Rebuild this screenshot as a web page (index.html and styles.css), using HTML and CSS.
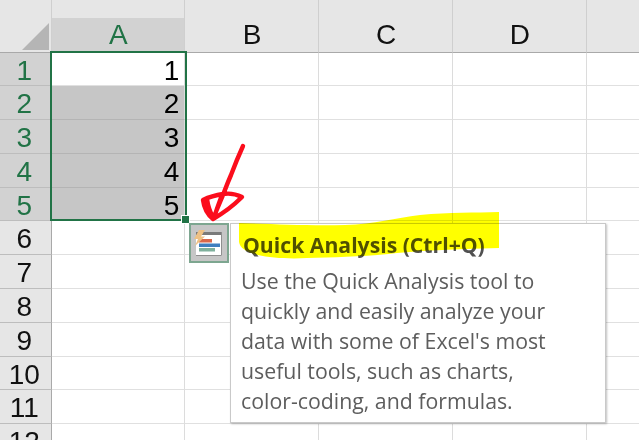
FILE: index.html
```html
<!DOCTYPE html>
<html lang="en">
<head>
<meta charset="utf-8">
<title>Quick Analysis</title>
<link rel="stylesheet" href="styles.css">
</head>
<body>
<div class="sheet">
  <div class="corner"><div class="tri"></div></div>
  <div class="col sel">A</div><div class="col">B</div><div class="col">C</div><div class="col">D</div><div class="col"></div>

  <div class="rh sel">1</div><div class="cell num first">1</div><div class="cell"></div><div class="cell"></div><div class="cell"></div><div class="cell"></div>
  <div class="rh sel">2</div><div class="cell num shade">2</div><div class="cell"></div><div class="cell"></div><div class="cell"></div><div class="cell"></div>
  <div class="rh sel">3</div><div class="cell num shade">3</div><div class="cell"></div><div class="cell"></div><div class="cell"></div><div class="cell"></div>
  <div class="rh sel">4</div><div class="cell num shade">4</div><div class="cell"></div><div class="cell"></div><div class="cell"></div><div class="cell"></div>
  <div class="rh sel">5</div><div class="cell num shade">5</div><div class="cell"></div><div class="cell"></div><div class="cell"></div><div class="cell"></div>
  <div class="rh">6</div><div class="cell"></div><div class="cell"></div><div class="cell"></div><div class="cell"></div><div class="cell"></div>
  <div class="rh">7</div><div class="cell"></div><div class="cell"></div><div class="cell"></div><div class="cell"></div><div class="cell"></div>
  <div class="rh">8</div><div class="cell"></div><div class="cell"></div><div class="cell"></div><div class="cell"></div><div class="cell"></div>
  <div class="rh">9</div><div class="cell"></div><div class="cell"></div><div class="cell"></div><div class="cell"></div><div class="cell"></div>
  <div class="rh">10</div><div class="cell"></div><div class="cell"></div><div class="cell"></div><div class="cell"></div><div class="cell"></div>
  <div class="rh">11</div><div class="cell"></div><div class="cell"></div><div class="cell"></div><div class="cell"></div><div class="cell"></div>
  <div class="rh">12</div><div class="cell"></div><div class="cell"></div><div class="cell"></div><div class="cell"></div><div class="cell"></div>
</div>

<div class="selection"></div>
<div class="handle"></div>

<div class="qa-button">
  <svg class="qa-icon" width="30" height="28" viewBox="0 0 30 28">
    <rect x="2" y="3" width="26" height="24" fill="#fff"/>
    <rect x="2" y="3" width="26" height="3" fill="#7a7a7a"/>
    <path d="M2 26.5H27.5V3" fill="none" stroke="#8f8f8f" stroke-width="1"/>
    <rect x="5" y="10" width="13" height="3.5" fill="#d9674a"/>
    <rect x="5" y="14.5" width="21" height="3.5" fill="#3f7fbf"/>
    <rect x="5" y="19" width="16" height="3.5" fill="#7fb09c"/>
    <path d="M5 1H11L7 7.5H11L1 17L4 10H0Z" fill="#eec184"/>
  </svg>
</div>

<div class="tooltip">
  <h1 class="tip-title">Quick Analysis (Ctrl+Q)</h1>
  <p class="tip-body">Use the Quick Analysis tool to<br>quickly and easily analyze your<br>data with some of Excel's most<br>useful tools, such as charts,<br>color-coding, and formulas.</p>
</div>

<svg class="marks" width="639" height="440" viewBox="0 0 639 440">
  <path class="hl" d="M239 223C270 224 310 226 345 225C375 224 395 218 420 215C450 212 475 213 499 212L499 248C465 249 430 250 397 253C365 257 335 257 307 258C290 259 270 258 258 255C246 252 240 248 239 242Z"/>
  <path class="arrow" d="M243 146C238 157 234 167 231 175C227 184 225 190 223 195C219 204 216 212 213 219C220 215 232 207 242 197C236 194 229 193 223 194C216 195 209 197 203 200C204 208 208 215 213 219M207 199C208 206 210 212 213 217M222 195C219 203 216 211 214 218"/>
</svg>
</body>
</html>
```
FILE: styles.css
```css
html, body {
  margin: 0;
  padding: 0;
  width: 639px;
  height: 440px;
  overflow: hidden;
  background: #fff;
}

.sheet {
  display: grid;
  grid-template-columns: 51.5px repeat(4, 133.8px) 60px;
  grid-template-rows: 52.5px repeat(12, 33.8px);
  height: 440px;
  overflow: hidden;
  font-family: "Liberation Sans", Arial, sans-serif;
  background: #fff;
}

.corner {
  background: #e6e6e6;
  border-right: 1px solid #cfcfcf;
  border-bottom: 1px solid #a9a9a9;
  box-sizing: border-box;
  position: relative;
}

.tri {
  position: absolute;
  left: 22px;
  top: 23px;
  width: 27px;
  height: 27px;
  background: #b5b5b5;
  clip-path: polygon(100% 0, 100% 100%, 0 100%);
}

.col {
  box-sizing: border-box;
  background: #e6e6e6;
  border-right: 1px solid #cfcfcf;
  border-bottom: 1px solid #a9a9a9;
  padding-top: 20px;
  padding-left: 1px;
  text-align: center;
  font-size: 28px;
  line-height: 30px;
  color: #111;
}

.col.sel {
  background: linear-gradient(#e6e6e6 18px, #d2d2d2 18px);
  color: #217346;
}

.rh {
  box-sizing: border-box;
  background: #e6e6e6;
  border-right: 1px solid #a9a9a9;
  border-bottom: 1px solid #bdbdbd;
  text-align: center;
  font-size: 28px;
  line-height: 36px;
  color: #111;
  padding-right: 2px;
  overflow: hidden;
}

.rh.sel {
  background: #d2d2d2;
  color: #217346;
}

.cell {
  box-sizing: border-box;
  border-right: 1px solid #dcdcdc;
  border-bottom: 1px solid #e0e0e0;
}

.num {
  text-align: right;
  font-size: 28px;
  line-height: 36px;
  color: #000;
  padding-right: 5px;
  overflow: hidden;
}

.shade {
  background: #c6c6c6;
  border-bottom-color: #b4b4b4;
}

.selection {
  position: absolute;
  left: 50px;
  top: 51px;
  width: 133px;
  height: 166px;
  border: 2px solid #217346;
  pointer-events: none;
}

.handle {
  position: absolute;
  left: 181px;
  top: 215px;
  width: 7px;
  height: 7px;
  background: #217346;
  border: 1px solid #fff;
}

.qa-button {
  position: absolute;
  left: 189px;
  top: 223px;
  width: 40px;
  height: 40px;
  box-sizing: border-box;
  border: 2px solid #7da690;
  background: #c6c6c6;
  display: flex;
  align-items: center;
  justify-content: center;
}

.qa-icon {
  display: block;
}

.tooltip {
  position: absolute;
  left: 230px;
  top: 223px;
  width: 376px;
  height: 200px;
  box-sizing: border-box;
  background: #fff;
  border: 1px solid #c9c9c9;
  box-shadow: 1px 1px 2px rgba(0, 0, 0, .25);
  padding: 6px 10px;
  font-family: "Open Sans", "Noto Sans", sans-serif;
  color: #5d5d5d;
}

.tip-title {
  margin: 0 0 0 2px;
  font-size: 21.2px;
  line-height: 30px;
  font-weight: 700;
  color: #505050;
  white-space: nowrap;
}

.tip-body {
  margin: 6px 0 0;
  font-size: 21.3px;
  line-height: 30px;
  white-space: nowrap;
}

.marks {
  position: absolute;
  left: 0;
  top: 0;
  pointer-events: none;
}

.hl {
  fill: #ffff00;
  mix-blend-mode: multiply;
}

.arrow {
  fill: none;
  stroke: #fb0d1c;
  stroke-width: 4.4;
  stroke-linecap: round;
  stroke-linejoin: round;
}
```
